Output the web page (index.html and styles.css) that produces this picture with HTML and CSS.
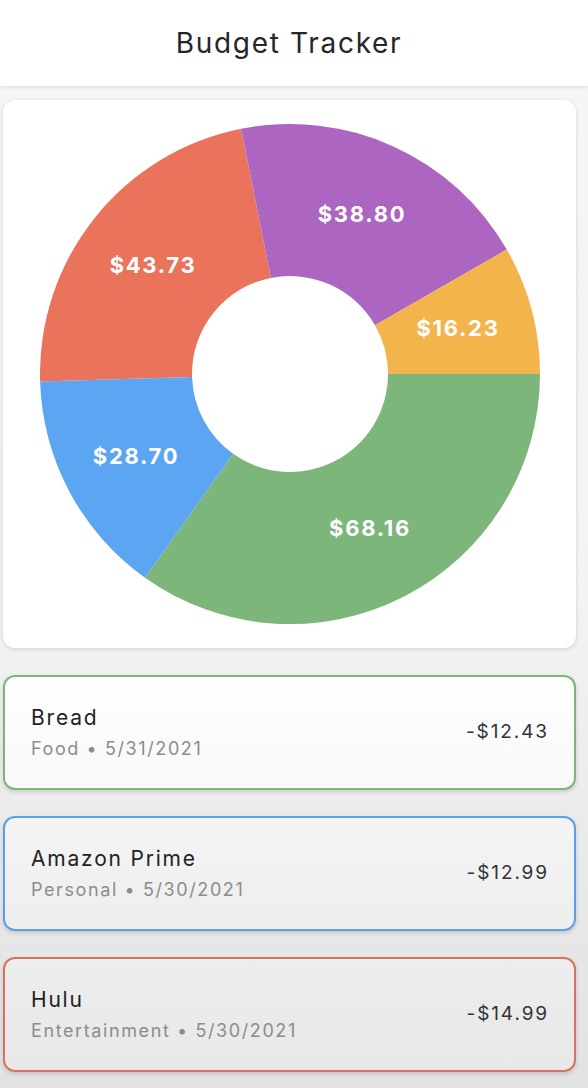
FILE: index.html
```html
<!DOCTYPE html>
<html lang="en">
<head>
<meta charset="utf-8">
<title>Budget Tracker</title>
<link rel="stylesheet" href="styles.css">
</head>
<body>
<header class="appbar">
  <h1 class="appbar-title">Budget Tracker</h1>
</header>
<main class="content">
  <section class="chart-card">
    <svg class="donut" width="500" height="500" viewBox="-250 -250 500 500" aria-label="Spending by category">
      <path class="seg-green" d="M250 0 A250 250 0 0 1 -144.98 203.68 L-56.82 79.84 A98 98 0 0 0 98 0 Z"/>
      <path class="seg-blue" d="M-144.98 203.68 A250 250 0 0 1 -249.89 7.59 L-97.95 2.98 A98 98 0 0 0 -56.82 79.84 Z"/>
      <path class="seg-red" d="M-249.89 7.59 A250 250 0 0 1 -48.83 -245.18 L-19.14 -96.11 A98 98 0 0 0 -97.95 2.98 Z"/>
      <path class="seg-purple" d="M-48.83 -245.18 A250 250 0 0 1 216.80 -124.48 L84.99 -48.79 A98 98 0 0 0 -19.14 -96.11 Z"/>
      <path class="seg-yellow" d="M216.80 -124.48 A250 250 0 0 1 250 0 L98 0 A98 98 0 0 0 84.99 -48.79 Z"/>
      <text class="seg-label" x="80" y="154">$68.16</text>
      <text class="seg-label" x="-154" y="82">$28.70</text>
      <text class="seg-label" x="-137" y="-109">$43.73</text>
      <text class="seg-label" x="72" y="-160">$38.80</text>
      <text class="seg-label" x="168" y="-46">$16.23</text>
    </svg>
  </section>

  <article class="tx tx-food">
    <div class="tx-info">
      <div class="tx-name">Bread</div>
      <div class="tx-meta">Food • 5/31/2021</div>
    </div>
    <div class="tx-amount">-$12.43</div>
  </article>

  <article class="tx tx-personal">
    <div class="tx-info">
      <div class="tx-name">Amazon Prime</div>
      <div class="tx-meta">Personal • 5/30/2021</div>
    </div>
    <div class="tx-amount">-$12.99</div>
  </article>

  <article class="tx tx-entertainment">
    <div class="tx-info">
      <div class="tx-name">Hulu</div>
      <div class="tx-meta">Entertainment • 5/30/2021</div>
    </div>
    <div class="tx-amount">-$14.99</div>
  </article>
</main>
</body>
</html>
```

FILE: styles.css
```css
* {
  box-sizing: border-box;
}

html, body {
  margin: 0;
  padding: 0;
}

body {
  width: 588px;
  min-height: 1088px;
  font-family: Inter, "Liberation Sans", sans-serif;
  color: #222;
  background: linear-gradient(to bottom, #f6f6f6 0%, #f3f3f3 55%, #e9e9e9 80%, #e2e2e2 100%);
  overflow: hidden;
}

.appbar {
  height: 86px;
  background: #ffffff;
  display: flex;
  align-items: center;
  justify-content: center;
  box-shadow: 0 2px 3px rgba(0, 0, 0, 0.08);
  position: relative;
  z-index: 1;
}

.appbar-title {
  margin: 0 10px 0 0;
  font-size: 28px;
  font-weight: 400;
  letter-spacing: 1.7px;
  color: #262626;
}

.content {
  display: flex;
  flex-direction: column;
  gap: 26px;
  padding: 14px 12px 0 3px;
}

.chart-card {
  height: 548px;
  background: #ffffff;
  border-radius: 12px;
  box-shadow: 0 1px 4px rgba(0, 0, 0, 0.14);
  display: flex;
  align-items: center;
  justify-content: center;
  margin-bottom: 1px;
}

.donut {
  display: block;
}

.seg-green { fill: #7cb67a; }
.seg-blue { fill: #5ba5f2; }
.seg-red { fill: #e9735b; }
.seg-purple { fill: #ac65c1; }
.seg-yellow { fill: #f3b54b; }

.seg-label {
  fill: #ffffff;
  font-family: Inter, "Liberation Sans", sans-serif;
  font-weight: 700;
  font-size: 22px;
  letter-spacing: 1.7px;
  text-anchor: middle;
  dominant-baseline: central;
}

.tx {
  height: 115px;
  border: 2px solid;
  border-radius: 12px;
  padding: 0 26px;
  display: flex;
  align-items: center;
  justify-content: space-between;
  box-shadow: 0 2px 4px rgba(0, 0, 0, 0.14);
}

.tx-food {
  border-color: #7ab877;
  background: linear-gradient(to bottom, #ffffff, #f8f8f8);
}

.tx-personal {
  border-color: #5c9fe6;
  background: linear-gradient(to bottom, #f4f4f4, #eeeeee);
}

.tx-entertainment {
  border-color: #d8725f;
  background: linear-gradient(to bottom, #ededed, #e8e8e8);
}

.tx-info {
  display: flex;
  flex-direction: column;
  gap: 8px;
}

.tx-name {
  font-size: 21px;
  line-height: 24px;
  letter-spacing: 1.8px;
  color: #222;
}

.tx-meta {
  font-size: 18px;
  line-height: 22px;
  letter-spacing: 1.6px;
  color: #8c8c8c;
}

.tx-amount {
  font-size: 19px;
  letter-spacing: 1.9px;
  color: #333;
  margin-top: -2px;
  margin-right: -1px;
}
```
